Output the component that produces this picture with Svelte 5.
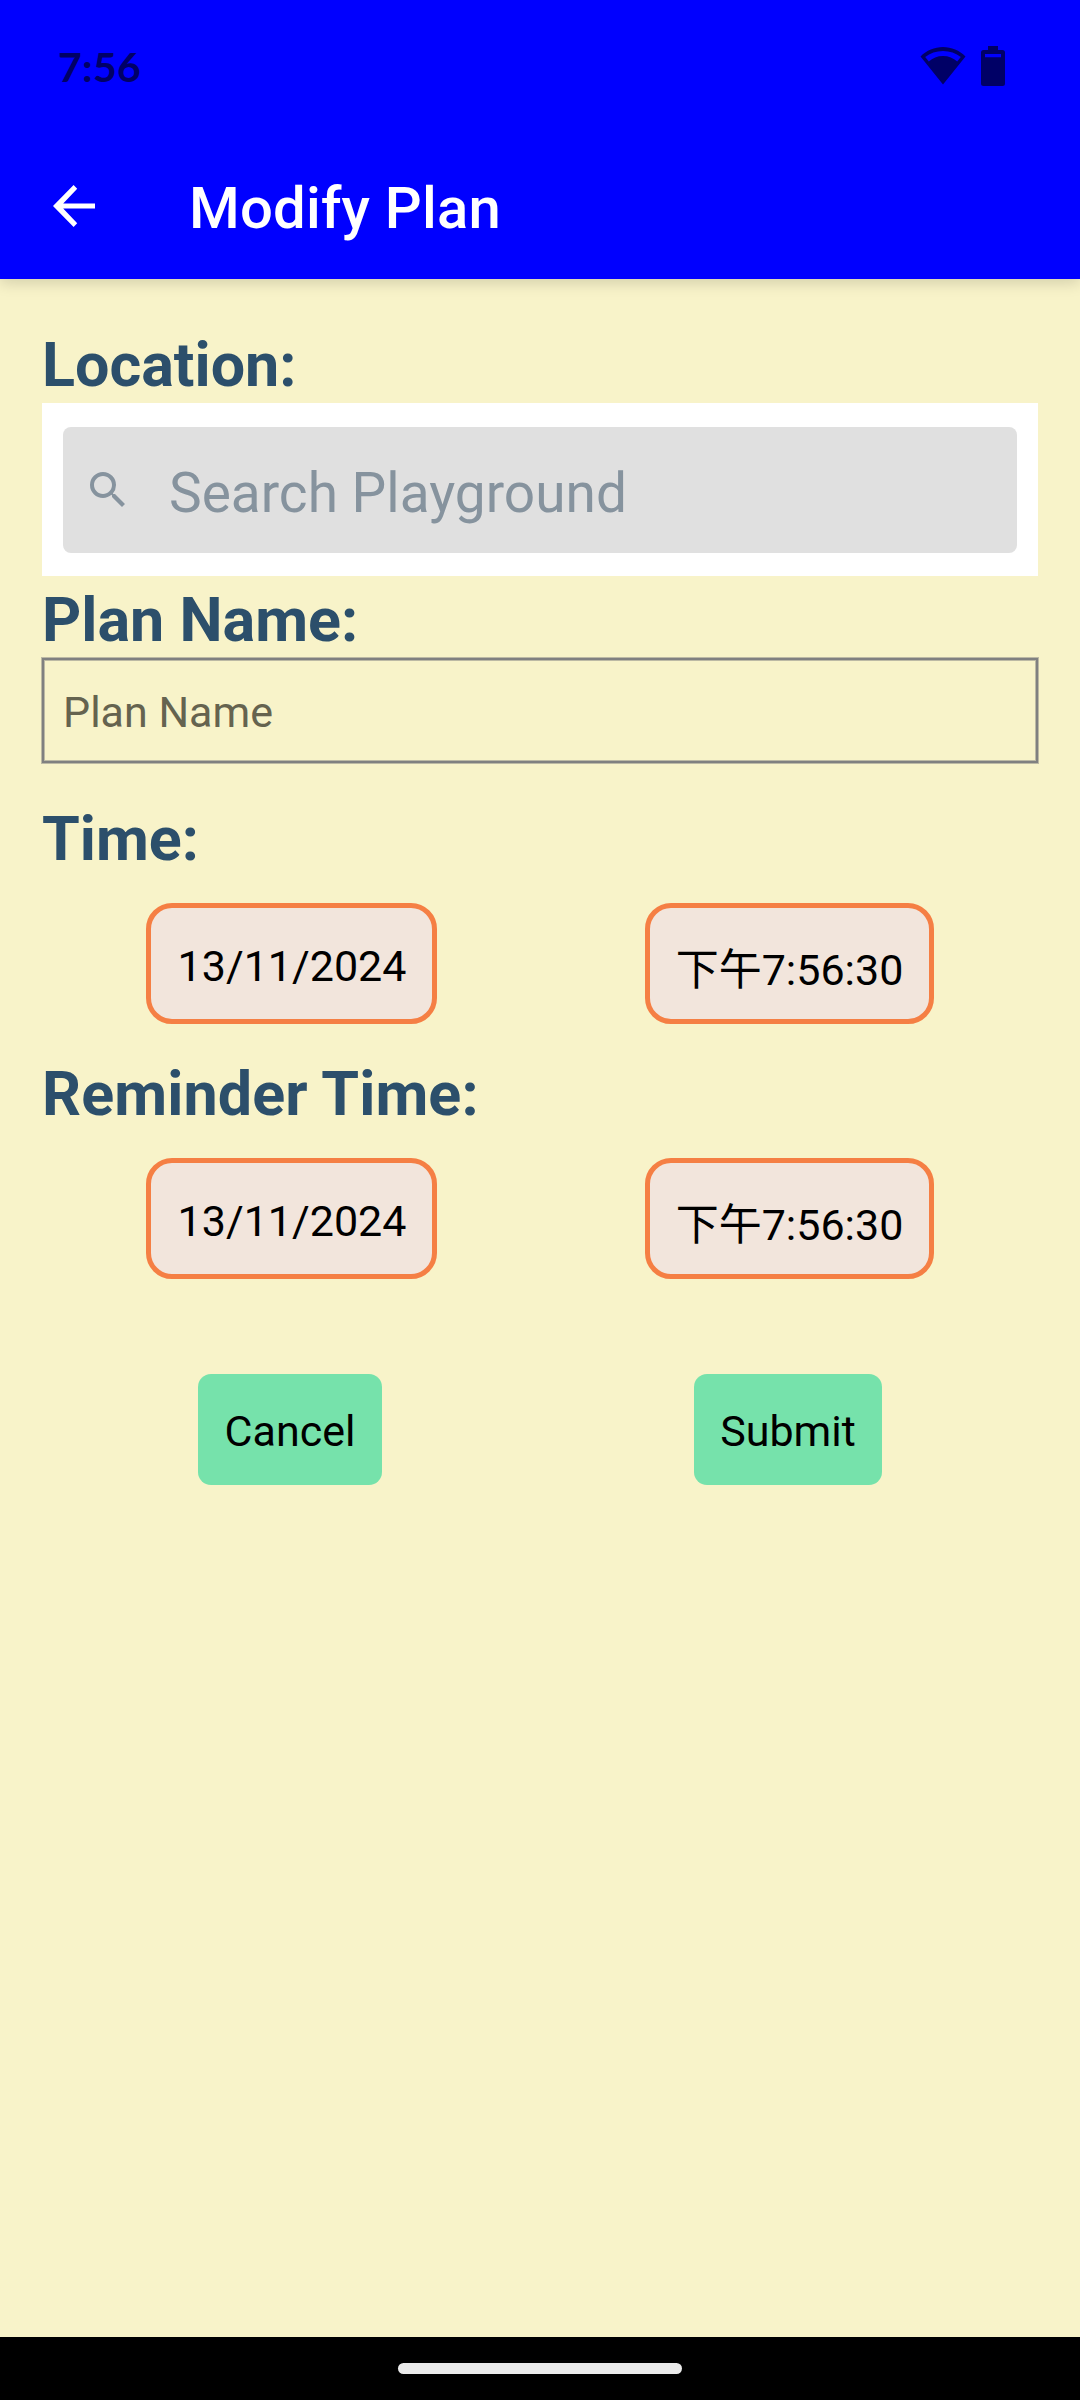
<script>
  const sections = [
    { label: 'Time:', date: '13/11/2024', time: '下午7:56:30' },
    { label: 'Reminder Time:', date: '13/11/2024', time: '下午7:56:30' },
  ];
</script>

<div class="screen">
  <header>
    <div class="status">
      <span class="clock">7:56</span>
      <div class="indicators">
        <svg class="wifi" viewBox="0 0 46 38" width="46" height="38">
          <path fill-rule="evenodd" d="M23 37.5 0.5 9.5C6.5 3.5 14.5 0 23 0s16.500 3.500 22.500 9.500zM5.200 10 8.800 14.600C12.500 11 17.500 9 23 9s10.500 2 14.200 5.600L40.800 10C36 6 29.700 3.900 23 3.900S10 6 5.200 10z" />
        </svg>
        <svg class="battery" viewBox="0 0 24 40" width="24" height="40">
          <path fill-rule="evenodd" d="M7 0h10v4h4.500a2.500 2.500 0 0 1 2.500 2.500v31a2.500 2.500 0 0 1-2.500 2.500h-19a2.500 2.500 0 0 1-2.500-2.500v-31a2.500 2.500 0 0 1 2.500-2.500H7zM4 8v3.300h16V8z" />
        </svg>
      </div>
    </div>
    <div class="appbar">
      <svg class="back" viewBox="0 0 42 42" width="42" height="42">
        <path d="M42 18.400v5.200H10.200L24.200 38.200 20.600 42 0 21 20.600 0 24.200 3.700 10.200 18.400z" />
      </svg>
      <h1>Modify Plan</h1>
    </div>
  </header>

  <main>
    <h2>Location:</h2>
    <div class="search-wrap">
      <div class="search">
        <svg viewBox="0 0 24 24" width="48" height="48">
          <path d="M15.500 14h-.79l-.28-.27A6.471 6.471 0 0 0 16 9.500 6.500 6.500 0 1 0 9.500 16c1.610 0 3.090-.59 4.230-1.570l.27.28v.79l5 4.990L20.490 19l-4.990-5zm-6 0C7.010 14 5 11.990 5 9.500S7.010 5 9.500 5 14 7.010 14 9.500 11.990 14 9.500 14z" />
        </svg>
        <span>Search Playground</span>
      </div>
    </div>
    <h2 class="name-label">Plan Name:</h2>
    <div class="field">Plan Name</div>

    {#each sections as s}
      <section>
        <h2>{s.label}</h2>
        <div class="row">
          <div class="cell"><div class="chip date">{s.date}</div></div>
          <div class="cell"><div class="chip time">{s.time}</div></div>
        </div>
      </section>
    {/each}

    <div class="row actions">
      <div class="cell"><div class="btn cancel">Cancel</div></div>
      <div class="cell"><div class="btn submit">Submit</div></div>
    </div>
  </main>

  <footer><div class="pill"></div></footer>
</div>

<style>
  :global(body) {
    margin: 0;
  }
  .screen {
    width: 1080px;
    height: 2400px;
    display: flex;
    flex-direction: column;
    background: #f8f3c9;
    font-family: Roboto, 'Noto Sans CJK TC', sans-serif;
    overflow: hidden;
  }
  header {
    box-sizing: border-box;
    height: 279px;
    flex: none;
    background: #0000ff;
    box-shadow: 0 4px 14px rgba(0, 0, 0, 0.15);
  }
  .status {
    height: 132px;
    display: flex;
    align-items: center;
    justify-content: space-between;
    padding: 0 75px 0 58px;
    color: #000066;
  }
  .clock {
    font: 700 41px/48px Lato, sans-serif;
    letter-spacing: 0.3px;
    padding-top: 1px;
  }
  .indicators {
    display: flex;
    align-items: center;
    gap: 15px;
    fill: #000066;
  }
  .appbar {
    height: 147px;
    display: flex;
    align-items: center;
    gap: 94px;
    padding-left: 53px;
  }
  .back {
    fill: #fff;
  }
  h1 {
    margin: 5px 0 0;
    color: #fff;
    font-size: 58px;
    letter-spacing: 0.2px;
    line-height: 68px;
    font-weight: 500;
  }
  main {
    flex: 1;
    padding: 50px 42px 0;
  }
  h2 {
    margin: 0;
    height: 74px;
    line-height: 72px;
    font-size: 61px;
    font-weight: 700;
    color: #2c4f6b;
  }
  .search-wrap {
    background: #fff;
    padding: 24px 21px 23px;
  }
  .search {
    height: 126px;
    display: flex;
    align-items: center;
    gap: 37px;
    padding-left: 21px;
    border-radius: 8px;
    background: #e0e0e0;
    color: #86939e;
    fill: #86939e;
    font-size: 55px;
  }
  .search span {
    padding-top: 6px;
  }
  .name-label {
    padding-top: 8px;
  }
  .field {
    box-sizing: border-box;
    height: 105px;
    line-height: 104px;
    border: 2px solid #808080;
    outline: 1px solid rgba(128, 128, 128, 0.5);
    box-shadow: inset 0 0 0 1px rgba(128, 128, 128, 0.5);
    padding-left: 19px;
    font-size: 43px;
    color: #65634f;
  }
  section {
    padding-top: 40px;
  }
  section + section {
    padding-top: 34px;
  }
  section + section h2 {
    letter-spacing: 0.1px;
  }
  .row {
    display: flex;
  }
  section .row {
    padding-top: 26px;
  }
  .cell {
    flex: 1;
    display: flex;
    justify-content: center;
  }
  .chip {
    box-sizing: border-box;
    height: 121px;
    border: 5px solid #f57f44;
    border-radius: 26px;
    background: #f2e5dc;
    text-align: center;
    font-size: 43px;
    white-space: nowrap;
    color: #000;
  }
  .date {
    width: 291px;
    line-height: 116px;
    margin-left: 1px;
    text-indent: 1px;
  }
  .time {
    width: 289px;
    line-height: 124px;
    text-indent: 1px;
  }
  .actions {
    padding-top: 95px;
  }
  .btn {
    height: 111px;
    line-height: 114px;
    border-radius: 13px;
    background: #76e2ab;
    text-align: center;
    font-size: 43px;
    color: #000;
  }
  .cancel {
    width: 184px;
    margin-right: 2px;
  }
  .submit {
    width: 188px;
    margin-right: 2px;
  }
  footer {
    flex: none;
    height: 63px;
    display: flex;
    justify-content: center;
    align-items: center;
    background: #000;
  }
  .pill {
    width: 284px;
    height: 11px;
    border-radius: 6px;
    background: #ebebeb;
  }
</style>
